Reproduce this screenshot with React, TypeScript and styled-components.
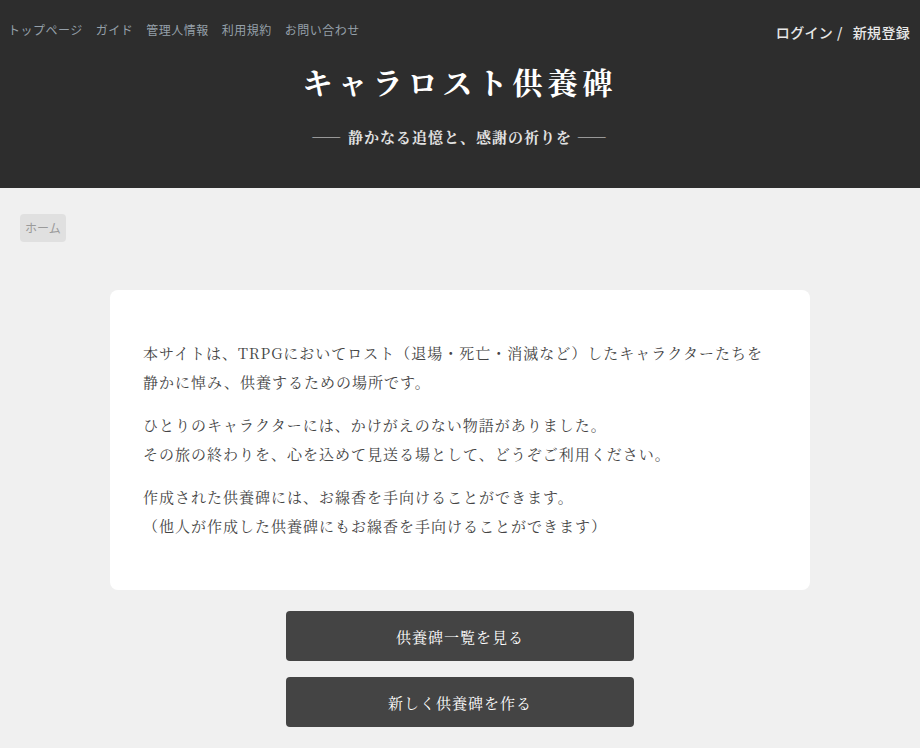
import React from 'react';
import styled, { createGlobalStyle } from 'styled-components';

const GlobalStyle = createGlobalStyle`
  html, body {
    margin: 0;
    padding: 0;
    background: #f0f0f0;
  }
  body {
    font-family: 'Noto Serif CJK JP', 'Liberation Serif', 'Noto Sans CJK JP', serif;
  }
`

const serif = `'Noto Serif CJK JP', 'Liberation Serif', 'Noto Sans CJK JP', serif`
const sans = `'Noto Sans CJK JP', 'Noto Sans', sans-serif`

const Header = styled.header`
  background: #2d2d2d;
  height: 188px;
  display: flex;
  flex-direction: column;
  box-sizing: border-box;
`

const TopBar = styled.div`
  display: flex;
  justify-content: space-between;
  align-items: flex-start;
  padding: 20px 10px 0 8px;
`

const Nav = styled.nav`
  display: flex;
  gap: 13px;
`

const NavLink = styled.a`
  font-family: ${sans};
  font-size: 12px;
  letter-spacing: 0.5px;
  color: #95a0aa;
  text-decoration: none;
  line-height: 20px;
`

const Auth = styled.div`
  display: flex;
  align-items: center;
  padding-top: 2px;
  font-family: ${sans};
  font-size: 14px;
  font-weight: 500;
  letter-spacing: 0.3px;
  color: #e8e8e8;
  line-height: 20px;
`

const AuthLink = styled.a`
  color: inherit;
  text-decoration: none;
`

const Slash = styled.span`
  margin: 0 10px 0 4px;
`

const TitleBlock = styled.div`
  display: flex;
  flex-direction: column;
  align-items: center;
  margin-top: 17px;
`

const Title = styled.h1`
  margin: 0;
  font-family: ${serif};
  font-size: 30px;
  font-weight: 700;
  letter-spacing: 5px;
  color: #ffffff;
  line-height: 44px;
`

const Subtitle = styled.p`
  margin: 23px 0 0;
  font-family: ${serif};
  font-size: 15px;
  font-weight: 700;
  letter-spacing: 1px;
  color: #e2e2e2;
  line-height: 22px;
`

const Rule = styled.span`
  font-weight: 400;
  letter-spacing: 2px;
`

const Main = styled.main`
  padding: 26px 20px 20px;
  display: flex;
  flex-direction: column;
`

const Crumb = styled.span`
  align-self: flex-start;
  background: #e0e0e0;
  border-radius: 4px;
  padding: 4px 5px;
  font-family: ${sans};
  font-size: 12px;
  color: #9a9a9a;
  line-height: 20px;
`

const Card = styled.section`
  width: 700px;
  box-sizing: border-box;
  margin: 48px auto 0;
  background: #ffffff;
  border-radius: 8px;
  padding: 48px 33px 50px;
`

const Para = styled.p`
  margin: 0 0 14px;
  font-family: ${serif};
  font-size: 15px;
  letter-spacing: 1px;
  line-height: 29px;
  color: #444;
  &:last-child {
    margin-bottom: 0;
  }
`

const Actions = styled.div`
  display: flex;
  flex-direction: column;
  align-items: center;
  gap: 16px;
  margin-top: 21px;
`

const ActionButton = styled.button`
  width: 348px;
  height: 50px;
  border: none;
  border-radius: 4px;
  background: #444444;
  color: #ffffff;
  font-family: ${serif};
  font-size: 15px;
  letter-spacing: 1px;
  cursor: pointer;
`

const navItems = ['トップページ', 'ガイド', '管理人情報', '利用規約', 'お問い合わせ']

export default function App() {
  return (
    <>
      <GlobalStyle />
      <Header>
        <TopBar>
          <Nav>
            {navItems.map((n) => (
              <NavLink key={n} href="#">{n}</NavLink>
            ))}
          </Nav>
          <Auth>
            <AuthLink href="#">ログイン</AuthLink>
            <Slash>/</Slash>
            <AuthLink href="#">新規登録</AuthLink>
          </Auth>
        </TopBar>
        <TitleBlock>
          <Title>キャラロスト供養碑</Title>
          <Subtitle>
            <Rule>――</Rule> 静かなる追憶と、感謝の祈りを <Rule>――</Rule>
          </Subtitle>
        </TitleBlock>
      </Header>
      <Main>
        <Crumb>ホーム</Crumb>
        <Card>
          <Para>
            本サイトは、TRPGにおいてロスト（退場・死亡・消滅など）したキャラクターたちを<br />
            静かに悼み、供養するための場所です。
          </Para>
          <Para>
            ひとりのキャラクターには、かけがえのない物語がありました。<br />
            その旅の終わりを、心を込めて見送る場として、どうぞご利用ください。
          </Para>
          <Para>
            作成された供養碑には、お線香を手向けることができます。<br />
            （他人が作成した供養碑にもお線香を手向けることができます）
          </Para>
        </Card>
        <Actions>
          <ActionButton>供養碑一覧を見る</ActionButton>
          <ActionButton>新しく供養碑を作る</ActionButton>
        </Actions>
      </Main>
    </>
  );
}
